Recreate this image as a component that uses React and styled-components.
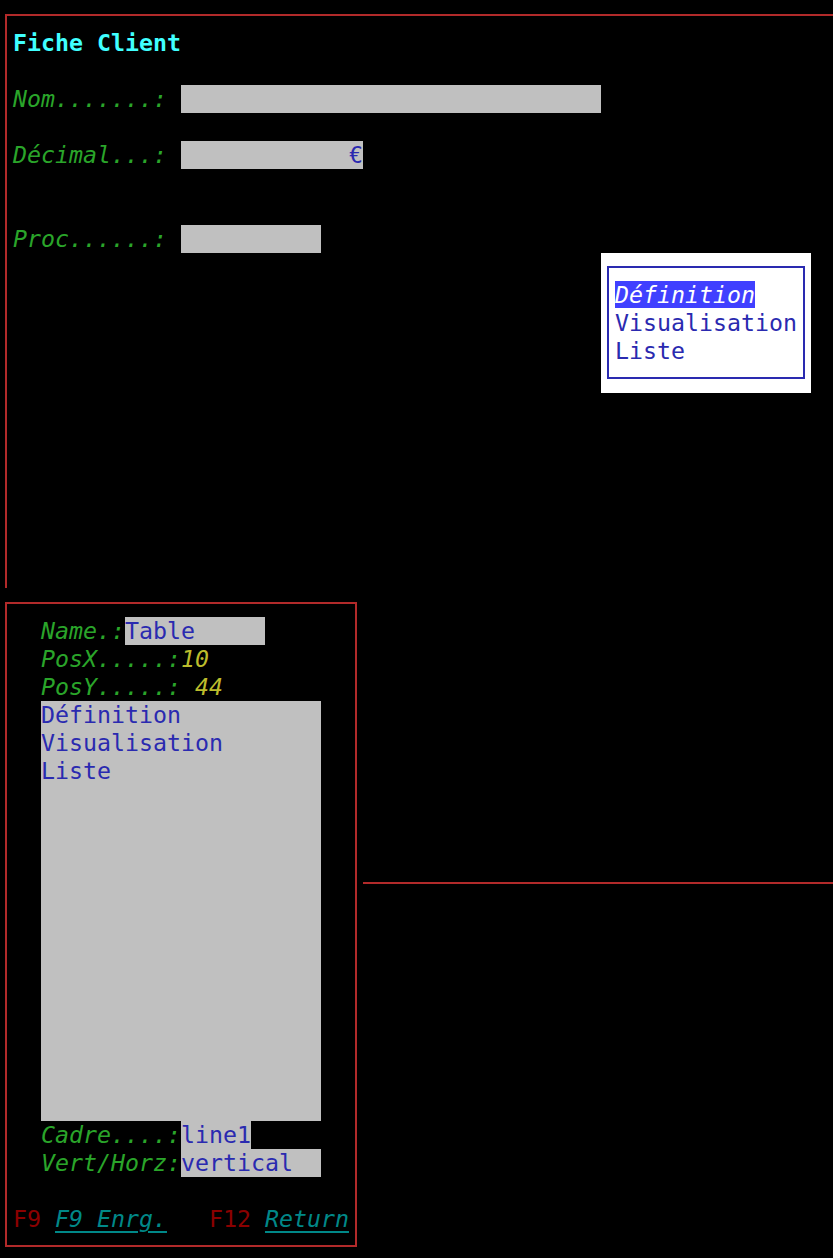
import React from 'react';
import styled, { createGlobalStyle } from 'styled-components';

const CELL = 14;
const LINE = 28;

const GlobalStyle = createGlobalStyle`
  html, body {
    margin: 0;
    background: #000;
  }
  body {
    font-family: "DejaVu Sans Mono", "Liberation Mono", monospace;
    font-size: 23.25px;
    line-height: ${LINE}px;
  }
`;

const Screen = styled.div`
  display: flex;
  flex-direction: column;
  gap: 14px;
  padding: 14px 0 0 5px;
  min-height: 1244px;
  box-sizing: border-box;
`;

const MainFrame = styled.section`
  position: relative;
  height: 574px;
  box-sizing: border-box;
  border-top: 2px solid #b22a2a;
  border-left: 2px solid #b22a2a;
  padding: 13px 0 0 6px;
`;

const Row = styled.div`
  display: flex;
  height: ${LINE}px;
  white-space: pre;
  margin-top: ${({ $skip = 0 }) => $skip * LINE}px;
`;

const Title = styled.span`
  color: #40ffff;
  font-weight: bold;
`;

const Label = styled.span`
  color: #2aa52a;
  font-style: italic;
`;

const Field = styled.span`
  display: inline-block;
  width: ${({ $w }) => $w * CELL}px;
  background: #c0c0c0;
  color: #2a2ab0;
  text-align: ${({ $right }) => ($right ? 'right' : 'left')};
`;

const Number = styled.span`
  color: #bcbc2c;
  font-style: italic;
`;

const Popup = styled.div`
  position: absolute;
  left: 594px;
  top: 237px;
  width: 210px;
  height: 140px;
  box-sizing: border-box;
  background: #fff;
  padding: 13px 6px;
`;

const PopupInner = styled.div`
  height: 113px;
  box-sizing: border-box;
  border: 2px solid #2a2ab0;
  padding: 13px 6px;
`;

const MenuItem = styled.div`
  height: ${LINE}px;
  white-space: pre;
  span {
    color: ${({ $active }) => ($active ? '#fff' : '#2a2ab0')};
    background: ${({ $active }) => ($active ? '#4040ff' : 'transparent')};
    font-style: ${({ $active }) => ($active ? 'italic' : 'normal')};
  }
`;

const Lower = styled.div`
  display: flex;
  align-items: flex-start;
`;

const PropsBox = styled.section`
  width: 352px;
  height: 645px;
  box-sizing: border-box;
  border: 2px solid #b22a2a;
  padding: 13px 0 0 6px;
`;

const Indent = styled.div`
  padding-left: ${2 * CELL}px;
`;

const ListBox = styled.div`
  width: ${20 * CELL}px;
  height: ${15 * LINE}px;
  background: #c0c0c0;
  color: #2a2ab0;
  white-space: pre;
`;

const Key = styled.span`
  color: #8b0000;
`;

const Action = styled.span`
  color: #008888;
  font-style: italic;
  text-decoration: underline;
  text-decoration-thickness: 2px;
  text-underline-offset: 4px;
`;

const Rule = styled.div`
  flex: 1;
  margin: 280px 0 0 6px;
  border-top: 2px solid #b22a2a;
`;

const menu = ['Définition', 'Visualisation', 'Liste'];

export default function App() {
  return (
    <>
      <GlobalStyle />
      <Screen>
        <MainFrame>
          <Row>
            <Title>Fiche Client</Title>
          </Row>
          <Row $skip={1}>
            <Label>Nom.......: </Label>
            <Field $w={30} />
          </Row>
          <Row $skip={1}>
            <Label>Décimal...: </Label>
            <Field $w={13} $right>€</Field>
          </Row>
          <Row $skip={2}>
            <Label>Proc......: </Label>
            <Field $w={10} />
          </Row>
          <Popup>
            <PopupInner>
              {menu.map((item, i) => (
                <MenuItem key={item} $active={i === 0}>
                  <span>{item}</span>
                </MenuItem>
              ))}
            </PopupInner>
          </Popup>
        </MainFrame>

        <Lower>
          <PropsBox>
            <Indent>
              <Row>
                <Label>Name.:</Label>
                <Field $w={10}>Table</Field>
              </Row>
              <Row>
                <Label>PosX.....:</Label>
                <Number>10</Number>
              </Row>
              <Row>
                <Label>PosY.....: </Label>
                <Number>44</Number>
              </Row>
              <ListBox>
                {menu.map((item) => (
                  <div key={item}>{item}</div>
                ))}
              </ListBox>
              <Row>
                <Label>Cadre....:</Label>
                <Field $w={5}>line1</Field>
              </Row>
              <Row>
                <Label>Vert/Horz:</Label>
                <Field $w={10}>vertical</Field>
              </Row>
            </Indent>
            <Row $skip={1}>
              <Key>F9 </Key>
              <Action>F9 Enrg.</Action>
              <span>   </span>
              <Key>F12 </Key>
              <Action>Return</Action>
            </Row>
          </PropsBox>
          <Rule />
        </Lower>
      </Screen>
    </>
  );
}
